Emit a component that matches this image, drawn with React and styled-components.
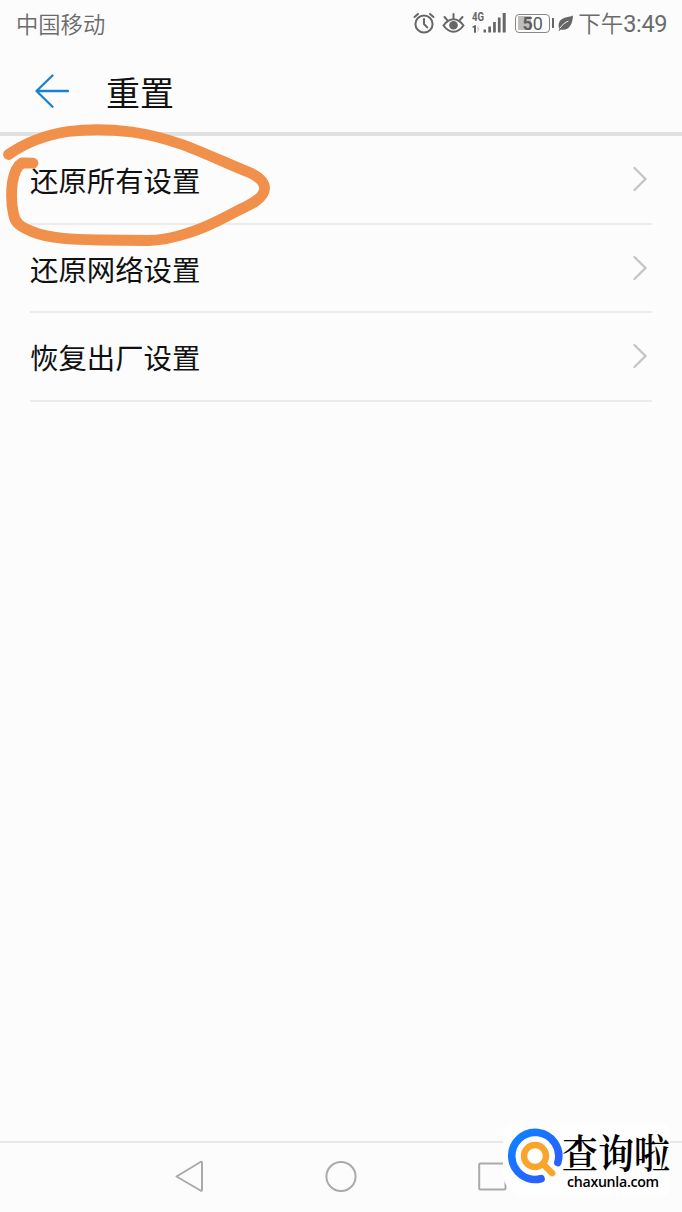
// 重置设置页

import styled, { createGlobalStyle } from "styled-components";

const items = ["还原所有设置", "还原网络设置", "恢复出厂设置"];

export default function App() {
  return (
    <Screen>
      <GlobalStyle />
      <StatusBar>
        <Carrier>中国移动</Carrier>
        <StatusIcons>
          <AlarmIcon />
          <EyeIcon />
          <SignalIcon />
          <Battery>
            <b>5</b>0
          </Battery>
          <BatteryTip />
          <LeafIcon />
          <Clock>
            下午<Digits>3:49</Digits>
          </Clock>
        </StatusIcons>
      </StatusBar>
      <Header>
        <BackIcon />
        <Title>重置</Title>
      </Header>
      <List>
        {items.map((label) => (
          <Row key={label}>
            <Label>{label}</Label>
            <Chevron />
          </Row>
        ))}
      </List>
      <NavBar>
        <NavIcons />
      </NavBar>
      <Marker />
      <Watermark>
        <LogoIcon />
        <Brand>
          <BrandName>查询啦</BrandName>
          <BrandUrl>chaxunla.com</BrandUrl>
        </Brand>
      </Watermark>
    </Screen>
  );
}

function AlarmIcon() {
  return (
    <Icon $w={22} $h={24} viewBox="0 0 22 24">
      <g fill="none" stroke="#666" strokeWidth="2" strokeLinecap="round">
        <circle cx="11" cy="13" r="8.6" />
        <path d="M11 8v5l3.2 3.4M1.5 6 5 3M20.5 6 17 3" />
      </g>
    </Icon>
  );
}

function EyeIcon() {
  return (
    <Icon $w={24} $h={24} $ml={7} viewBox="0 0 24 24">
      <g fill="none" stroke="#666" strokeWidth="2" strokeLinecap="round">
        <path d="M1.5 14.5C7.5 6.3 15.500 6.3 21.500 14.500C15.500 22.700 7.500 22.700 1.500 14.500Z" />
        <path d="M11.500 3v4M2.500 6l3 3.300M20.500 6l-3 3.300" />
      </g>
      <circle cx="11.500" cy="14.300" r="4.300" fill="#666" />
    </Icon>
  );
}

function SignalIcon() {
  return (
    <Icon $w={35} $h={24} $ml={6} viewBox="0 0 35 24">
      <g fill="#666">
        <text
          x="0"
          y="10"
          fontFamily="Roboto, sans-serif"
          fontWeight="700"
          fontSize="12"
          textLength="12"
          lengthAdjust="spacingAndGlyphs"
        >
          4G
        </text>
        <path d="M.5 15.500l2-1.300H4v7.500H2v-5.300L.5 17z" />
        <path d="M5.500 14.500l2 3.500-2 3.500z" opacity="0.35" />
        <path d="M11.500 18.500h2.500v3h-2.500zM16.300 15.500h2.700v6h-2.700zM21.100 11h2.700v10.500h-2.700zM25.900 6.500h2.700v15h-2.700zM30.700 2h3v19.500h-3z" />
      </g>
    </Icon>
  );
}

function LeafIcon() {
  return (
    <Icon $w={16} $h={18} $ml={4} viewBox="0 0 16 18">
      <path
        d="M15 1.500C10 3.500 2.500 3 .8 9.500c-.5 2-.2 4 .8 5.500l-1 1.600.9.500 1.200-1.500C11.500 17 14.500 10 15 1.500z"
        fill="#666"
      />
      <path
        d="M2 14C4.500 10.500 7 8.500 10.500 7"
        fill="none"
        stroke="#fcfcfc"
        strokeWidth="0.900"
      />
    </Icon>
  );
}

function BackIcon() {
  return (
    <Icon $w={36} $h={36} viewBox="0 0 36 36">
      <path
        d="M18.500 2.500 2.500 18l16 15.800M2.500 18H34"
        fill="none"
        stroke="#1b80cf"
        strokeWidth="2.300"
        strokeLinecap="round"
        strokeLinejoin="round"
      />
    </Icon>
  );
}

function Chevron() {
  return (
    <Icon $w={15} $h={26} viewBox="0 0 15 26">
      <path
        d="M1.500 2 12.500 13l-11 11"
        fill="none"
        stroke="#c4c4c4"
        strokeWidth="2.200"
        strokeLinecap="round"
      />
    </Icon>
  );
}

function NavIcons() {
  return (
    <Icon $w={682} $h={69} viewBox="0 0 682 69">
      <g fill="none" stroke="#aaa" strokeWidth="2" strokeLinejoin="round">
        <path d="M176.500 33.500 200.500 19q1.500-.7 1.500 1V46.500q0 1.700-1.500 1z" />
        <circle cx="341" cy="33.500" r="14.600" />
        <rect x="479.200" y="20.500" width="26.300" height="26" rx="1" />
      </g>
    </Icon>
  );
}

function LogoIcon() {
  return (
    <Icon $w={56} $h={56} viewBox="0 0 56 56">
      <defs>
        <linearGradient id="ring" x1="0" y1="0" x2="1" y2="1">
          <stop offset="0" stopColor="#0d84ff" />
          <stop offset="1" stopColor="#3157ff" />
        </linearGradient>
      </defs>
      <g fill="none" strokeLinecap="round">
        <path
          d="M50.800 34.500A23.500 23.500 0 1 0 34 50.700"
          stroke="url(#ring)"
          strokeWidth="7.600"
        />
        <circle cx="28" cy="28" r="11" stroke="#f9a52b" strokeWidth="6.400" />
        <path d="m37 37 8.200 8.200" stroke="#f9a52b" strokeWidth="6.400" />
      </g>
    </Icon>
  );
}

// 手绘圈注
function Marker() {
  return (
    <MarkerSvg viewBox="0 0 290 260">
      <path
        d="M8.500 154.500C25 143 45 135 68 131.500C88 129 112 129.500 132 132C150 134.500 166 139 182 144.500C204 152.500 228 164 247 171.500C258 176 265 181 264.500 189C264 198 252 204 239 210C222 219 206 228 188 233C176 237 163 240.500 148 240.500L100 240C77 239.500 49 239 32 231.500C20 226.500 15 223 13.500 214C11.500 205 11 193 12.500 182C14 173 17 166 22 163L33 163.200"
        fill="none"
        stroke="#f0904a"
        strokeWidth="10.800"
        strokeLinecap="round"
        strokeLinejoin="round"
      />
    </MarkerSvg>
  );
}

const GlobalStyle = createGlobalStyle`
  * {
    box-sizing: border-box;
  }
  body {
    margin: 0;
    background: #fcfcfc;
    font-family: Roboto, "Noto Sans CJK SC", sans-serif;
  }
`;
const Screen = styled.div`
  position: relative;
  display: flex;
  flex-direction: column;
  width: 682px;
  height: 1212px;
  overflow: hidden;
  background: #fcfcfc;
`;
const Icon = styled.svg`
  display: block;
  flex: none;
  width: ${(p) => p.$w}px;
  height: ${(p) => p.$h}px;
  margin-left: ${(p) => p.$ml || 0}px;
`;
const StatusBar = styled.div`
  display: flex;
  justify-content: space-between;
  align-items: center;
  height: 46px;
  padding: 0 15px 0 16px;
  color: #6b6b6b;
`;
const Carrier = styled.span`
  font-family: "Noto Sans CJK SC", sans-serif;
  font-size: 22.3px;
  font-weight: 350;
  line-height: 46px;
`;
const StatusIcons = styled.div`
  display: flex;
  align-items: center;
`;
const Battery = styled.div`
  width: 35px;
  height: 19px;
  margin-left: 8px;
  border: 1.5px solid #888;
  border-radius: 4px;
  background: linear-gradient(to right, #bdbdbd 45%, transparent 45%) 2px 1px /
    28px 14px no-repeat;
  color: #5c5c5c;
  font-size: 18px;
  line-height: 17px;
  text-align: center;
`;
const BatteryTip = styled.div`
  width: 2px;
  height: 10px;
  margin-left: 2px;
  background: #666;
`;
const Clock = styled.span`
  margin-left: 4px;
  font-family: "Noto Sans CJK SC", sans-serif;
  font-size: 22.5px;
  font-weight: 350;
  line-height: 46px;
  white-space: nowrap;
`;
const Digits = styled.span`
  font-family: Roboto, sans-serif;
  font-size: 23.5px;
  font-weight: 400;
  letter-spacing: -0.4px;
`;
const Header = styled.header`
  display: flex;
  align-items: center;
  gap: 36px;
  height: 90px;
  padding: 4px 0 0 34px;
  border-bottom: 4px solid #e1e1e2;
`;
const Title = styled.h1`
  margin: 0;
  padding-top: 1px;
  font-family: "Noto Sans CJK SC", sans-serif;
  font-size: 34px;
  font-weight: 400;
  line-height: 48px;
  color: #111;
`;
const List = styled.main`
  flex: 1;
  padding: 0 30px;
`;
const Row = styled.div`
  display: flex;
  justify-content: space-between;
  align-items: center;
  height: 88.5px;
  padding-right: 4px;
  border-bottom: 2px solid #ebebeb;
`;
const Label = styled.span`
  padding-top: 2px;
  font-family: "Noto Sans CJK SC", sans-serif;
  font-size: 28.4px;
  line-height: 42px;
  color: #111;
`;
const NavBar = styled.nav`
  height: 71px;
  border-top: 2px solid #e8e8e8;
`;
const MarkerSvg = styled.svg`
  position: absolute;
  top: 0;
  left: 0;
  width: 290px;
  height: 260px;
`;
const Watermark = styled.div`
  position: absolute;
  left: 503px;
  top: 1123px;
  display: flex;
  width: 167px;
  height: 74px;
  padding: 5px 0 0 4px;
  border-radius: 10px 10px 10px 24px;
  background: #fefefe;
`;
const Brand = styled.div`
  display: flex;
  flex-direction: column;
  margin-left: -1px;
`;
const BrandName = styled.span`
  height: 46px;
  font-family: "Noto Serif CJK SC", "Noto Sans CJK SC", serif;
  font-size: 36px;
  font-weight: 600;
  line-height: 46px;
  white-space: nowrap;
  color: #000;
  transform: scaleY(1.12);
`;
const BrandUrl = styled.span`
  margin-left: 5px;
  font-family: "Open Sans", sans-serif;
  font-size: 14.2px;
  font-weight: 600;
  letter-spacing: -0.3px;
  line-height: 15px;
  color: #000;
`;
